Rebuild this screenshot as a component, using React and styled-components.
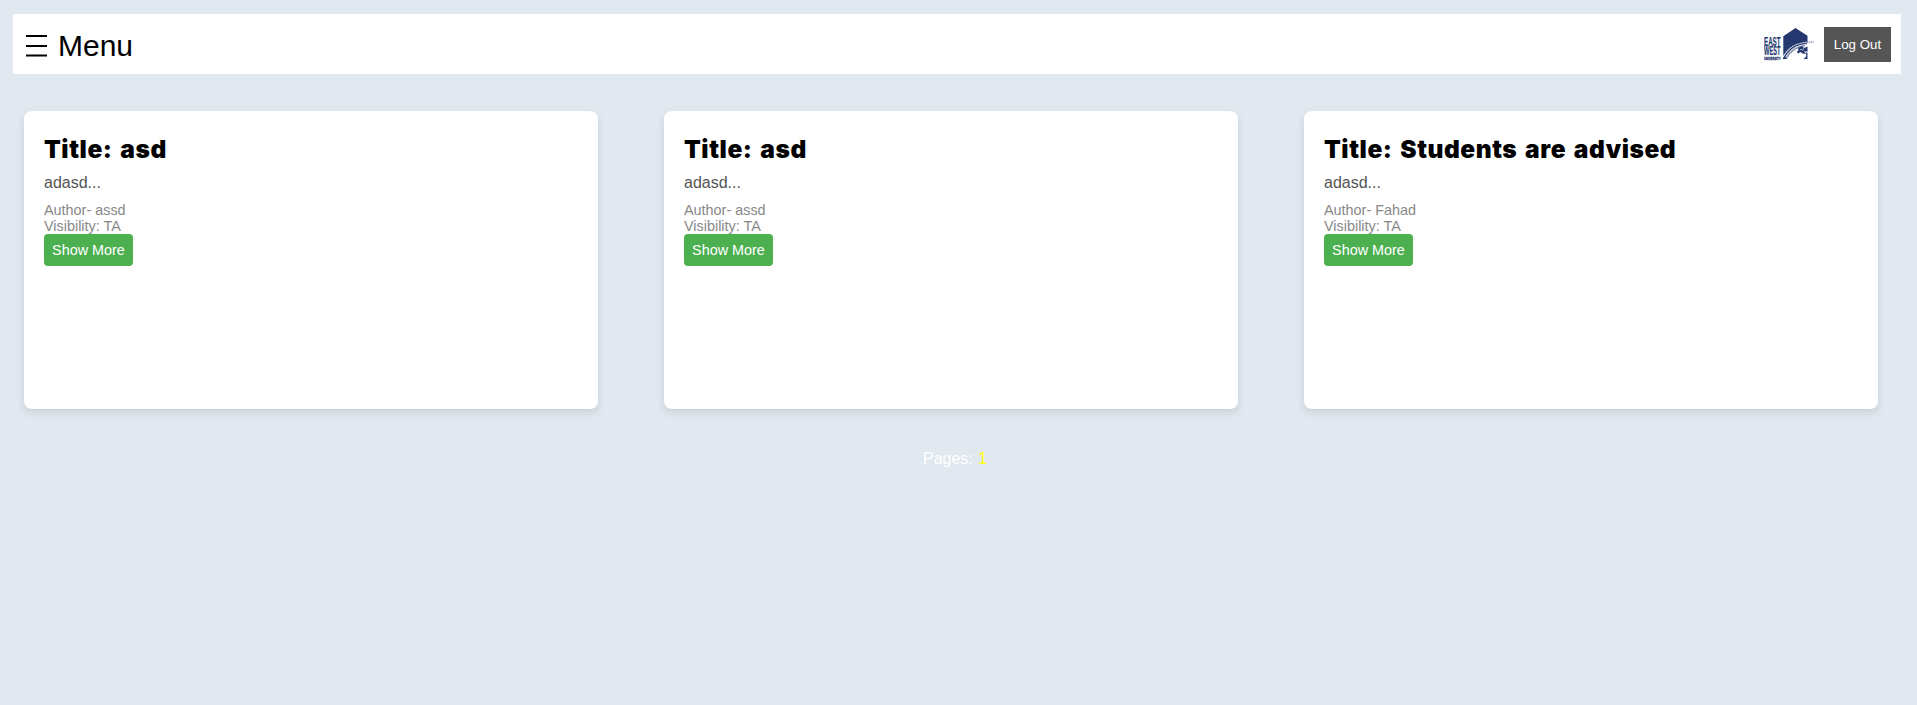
import React from "react";
import styled, { createGlobalStyle } from "styled-components";

const GlobalStyle = createGlobalStyle`
  * { box-sizing: border-box; }
  body {
    margin: 0;
    background: #e1e8f0;
    font-family: "Liberation Sans", Arial, sans-serif;
    font-size: 16px;
  }
`;

const Page = styled.div`
  min-height: 705px;
  padding: 14px 16px 0 13px;
`;

const Header = styled.header`
  display: flex;
  align-items: center;
  justify-content: space-between;
  height: 60px;
  padding: 0 10px 0 13px;
  background: #fff;
`;

const MenuButton = styled.div`
  display: flex;
  align-items: center;
  gap: 11px;
  padding-top: 4px;
  font-size: 30px;
  line-height: 34px;
  color: #000;
`;

const HeaderActions = styled.div`
  display: flex;
  align-items: center;
  gap: 10px;
`;

const LogoutButton = styled.button`
  width: 67px;
  height: 35px;
  padding: 0;
  border: 0;
  background: #555;
  color: #fff;
  font: 13.333px "Liberation Sans", Arial, sans-serif;
`;

const Cards = styled.main`
  display: grid;
  grid-template-columns: repeat(3, 574px);
  column-gap: 66px;
  margin: 37px 0 0 11px;
`;

const Card = styled.article`
  height: 298px;
  padding: 21px 20px 20px;
  border-radius: 8px;
  background: #fff;
  box-shadow: 0 4px 8px rgba(0, 0, 0, 0.1);
`;

const Title = styled.h2`
  margin: 0 0 8px;
  font: 900 24.5px/34px "Arial Black", Inter, "Liberation Sans", sans-serif;
  letter-spacing: 0.55px;
  word-spacing: 2.3px;
  color: #000;
  white-space: nowrap;
`;

const Excerpt = styled.p`
  margin: 0 0 10px;
  line-height: 18px;
  color: #555;
`;

const Meta = styled.div`
  font-size: 14.4px;
  line-height: 16px;
  color: #888;
`;

const ShowMore = styled.button`
  display: block;
  width: 89px;
  height: 32px;
  margin: 0;
  padding: 0;
  border: 0;
  border-radius: 4px;
  background: #4caf50;
  color: #fff;
  font: 14.4px "Liberation Sans", Arial, sans-serif;
`;

const Pagination = styled.nav`
  margin: 41px 0 0 910px;
  line-height: 18px;
  color: #fff;
`;

const CurrentPage = styled.span`
  margin-left: 1px;
  color: #ff0;
`;

const MenuIcon = () => (
  <svg width="21" height="22" viewBox="0 0 21 22" fill="#000">
    <rect y="0" width="21" height="2" />
    <rect y="10" width="21" height="2" />
    <rect y="19.5" width="21" height="2" />
  </svg>
);

const Logo = () => (
  <svg width="50" height="34" viewBox="0 0 50 34" fill="#25376f">
    <g fontFamily="Liberation Sans, Arial, sans-serif" fontWeight="700">
      <text x="0" y="18.5" fontSize="12.5" textLength="16.5" lengthAdjust="spacingAndGlyphs" stroke="#25376f" strokeWidth=".2">EAST</text>
      <text x="0" y="28.3" fontSize="12" textLength="16.5" lengthAdjust="spacingAndGlyphs" stroke="#25376f" strokeWidth=".2">WEST</text>
      <text x="0" y="32.6" fontSize="4.2" textLength="16.5" lengthAdjust="spacingAndGlyphs" stroke="#25376f" strokeWidth=".3">UNIVERSITY</text>
    </g>
    <path d="M19.3 9.2 31.5 1 43.5 8.8V15C34 15.5 25 20 19.3 29Z" />
    <path d="M19.5 32C24 22 32 16.8 43 16.2" fill="none" stroke="#25376f" strokeWidth="1.4" />
    <path d="M20 28.5C25 20 33 15.7 44 15.3" fill="none" stroke="#c8cedf" strokeWidth="1.3" strokeDasharray="1.2 .8" />
    <path d="M43 15.2H50" stroke="#727d9f" strokeWidth="1.3" strokeDasharray="1.3 .8" />
    <path d="M22 31.8C26 24 32 19.6 41 18.5" fill="none" stroke="#8791b2" strokeWidth="1.6" />
    <path d="m34 21 4-2 2 2 3.5-1.5v5.2l-3.5-.4 2.2 2.8-3.6-.5-2.2-1.6-2.2 1.5-1.4-1.5 1.8-1.9Z" />
    <path d="M36 22.5h2M39.5 21l-1 3" stroke="#b9c2d8" strokeWidth=".8" />
    <path d="M19.3 30.2h3.5L22 32h-2.7zM42.2 25l1.3 1v6h-4l2.7-2.5z" />
  </svg>
);

const notices = [
  { id: 1, title: "asd", text: "adasd", author: "assd", visibility: "TA" },
  { id: 2, title: "asd", text: "adasd", author: "assd", visibility: "TA" },
  { id: 3, title: "Students are advised", text: "adasd", author: "Fahad", visibility: "TA" },
];

export default function App() {
  return (
    <Page>
      <GlobalStyle />
      <Header>
        <MenuButton>
          <MenuIcon />
          <span>Menu</span>
        </MenuButton>
        <HeaderActions>
          <Logo />
          <LogoutButton>Log Out</LogoutButton>
        </HeaderActions>
      </Header>
      <Cards>
        {notices.map((notice) => (
          <Card key={notice.id}>
            <Title>Title: {notice.title}</Title>
            <Excerpt>{notice.text}...</Excerpt>
            <Meta>Author- {notice.author}</Meta>
            <Meta>Visibility: {notice.visibility}</Meta>
            <ShowMore>Show More</ShowMore>
          </Card>
        ))}
      </Cards>
      <Pagination>
        Pages: <CurrentPage>1</CurrentPage>
      </Pagination>
    </Page>
  );
}
